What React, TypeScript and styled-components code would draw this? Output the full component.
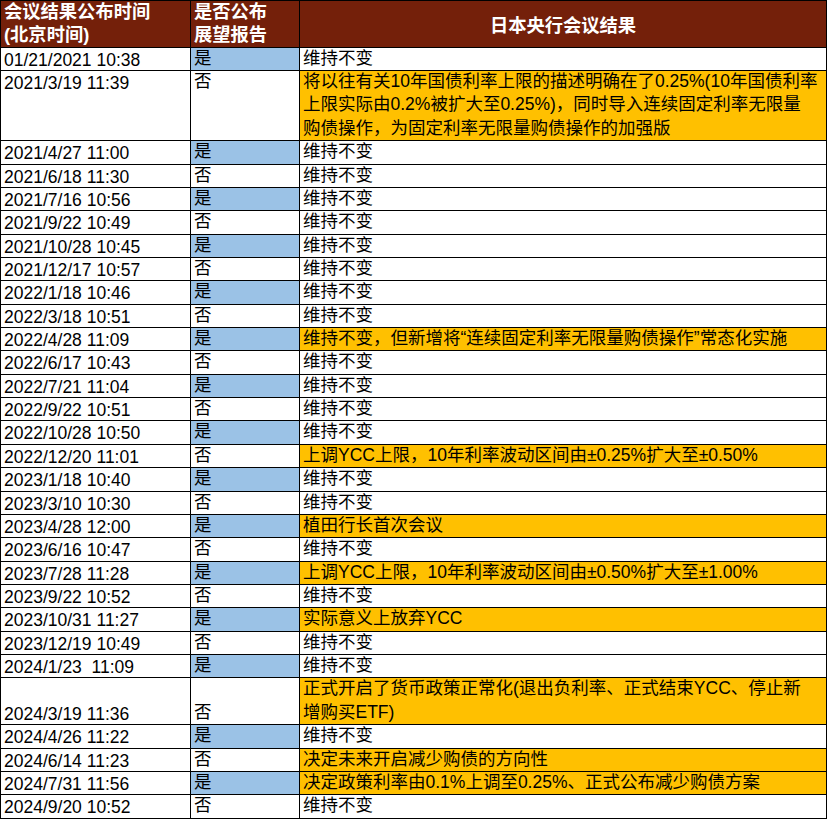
import React from 'react';
import styled, { createGlobalStyle } from 'styled-components';

const LINE = 23.36;

const GlobalStyle = createGlobalStyle`
  body {
    margin: 0;
    background: #fff;
  }
`;

const Sheet = styled.div`
  display: grid;
  grid-template-columns: 190px 109px 527px;
  width: 827px;
  box-sizing: border-box;
  border-top: 1px solid #000;
  border-left: 1px solid #000;
  font-family: "Liberation Sans", "Noto Sans CJK SC", sans-serif;
  font-size: 17.5px;
  color: #000;
`;

const Cell = styled.div<{ $lines: number; $bg?: string }>`
  height: ${(p) => p.$lines * LINE}px;
  box-sizing: border-box;
  border-right: 1px solid #000;
  border-bottom: 1px solid #000;
  background: ${(p) => p.$bg ?? '#fff'};
  padding: 0 3px;
  display: flex;
  flex-direction: column;
  overflow: hidden;
`;

const HeadCell = styled(Cell)<{ $center?: boolean }>`
  background: #74200a;
  color: #fff;
  font-weight: bold;
  font-size: 18.3px;
  padding-top: ${(p) => (p.$center ? '5px' : '0')};
  justify-content: ${(p) => (p.$center ? 'center' : 'flex-start')};
  align-items: ${(p) => (p.$center ? 'center' : 'flex-start')};
`;

const Line = styled.div<{ $latin?: boolean }>`
  flex-shrink: 0;
  height: ${LINE}px;
  line-height: ${(p) => (p.$latin ? '25.3px' : '21px')};
  white-space: pre;
`;

type Row = {
  time: string;
  report: '是' | '否';
  result?: string[];
  highlight?: boolean;
  lines?: number;
  bottom?: boolean;
};

const rows: Row[] = [
  { time: '01/21/2021 10:38', report: '是' },
  {
    time: '2021/3/19 11:39',
    report: '否',
    lines: 3,
    highlight: true,
    result: [
      '将以往有关10年国债利率上限的描述明确在了0.25%(10年国债利率',
      '上限实际由0.2%被扩大至0.25%)，同时导入连续固定利率无限量',
      '购债操作，为固定利率无限量购债操作的加强版',
    ],
  },
  { time: '2021/4/27 11:00', report: '是' },
  { time: '2021/6/18 11:30', report: '否' },
  { time: '2021/7/16 10:56', report: '是' },
  { time: '2021/9/22 10:49', report: '否' },
  { time: '2021/10/28 10:45', report: '是' },
  { time: '2021/12/17 10:57', report: '否' },
  { time: '2022/1/18 10:46', report: '是' },
  { time: '2022/3/18 10:51', report: '否' },
  {
    time: '2022/4/28 11:09',
    report: '是',
    highlight: true,
    result: ['维持不变，但新增将“连续固定利率无限量购债操作”常态化实施'],
  },
  { time: '2022/6/17 10:43', report: '否' },
  { time: '2022/7/21 11:04', report: '是' },
  { time: '2022/9/22 10:51', report: '否' },
  { time: '2022/10/28 10:50', report: '是' },
  {
    time: '2022/12/20 11:01',
    report: '否',
    highlight: true,
    result: ['上调YCC上限，10年利率波动区间由±0.25%扩大至±0.50%'],
  },
  { time: '2023/1/18 10:40', report: '是' },
  { time: '2023/3/10 10:30', report: '否' },
  { time: '2023/4/28 12:00', report: '是', highlight: true, result: ['植田行长首次会议'] },
  { time: '2023/6/16 10:47', report: '否' },
  {
    time: '2023/7/28 11:28',
    report: '是',
    highlight: true,
    result: ['上调YCC上限，10年利率波动区间由±0.50%扩大至±1.00%'],
  },
  { time: '2023/9/22 10:52', report: '否' },
  { time: '2023/10/31 11:27', report: '是', highlight: true, result: ['实际意义上放弃YCC'] },
  { time: '2023/12/19 10:49', report: '否' },
  { time: '2024/1/23  11:09', report: '是' },
  {
    time: '2024/3/19 11:36',
    report: '否',
    lines: 2,
    bottom: true,
    highlight: true,
    result: ['正式开启了货币政策正常化(退出负利率、正式结束YCC、停止新', '增购买ETF)'],
  },
  { time: '2024/4/26 11:22', report: '是' },
  { time: '2024/6/14 11:23', report: '否', highlight: true, result: ['决定未来开启减少购债的方向性'] },
  {
    time: '2024/7/31 11:56',
    report: '是',
    highlight: true,
    result: ['决定政策利率由0.1%上调至0.25%、正式公布减少购债方案'],
  },
  { time: '2024/9/20 10:52', report: '否' },
];

const BLUE = '#9bc2e6';
const YELLOW = '#ffc000';

const App: React.FC = () => {
  return (
    <>
      <GlobalStyle />
      <Sheet>
        <HeadCell $lines={2}>
          <Line>会议结果公布时间</Line>
          <Line>(北京时间)</Line>
        </HeadCell>
        <HeadCell $lines={2}>
          <Line>是否公布</Line>
          <Line>展望报告</Line>
        </HeadCell>
        <HeadCell $lines={2} $center>
          <Line>日本央行会议结果</Line>
        </HeadCell>

        {rows.map((r) => {
          const lines = r.lines ?? 1;
          // bottom-aligned rows get empty lines above the value
          const pad = r.bottom ? Array(lines - 1).fill('') : [];
          const result = r.result ?? ['维持不变'];
          return (
            <React.Fragment key={r.time}>
              <Cell $lines={lines}>
                {pad.map((_, i) => (
                  <Line key={i} />
                ))}
                <Line $latin>{r.time}</Line>
              </Cell>
              <Cell $lines={lines} $bg={r.report === '是' ? BLUE : undefined}>
                {pad.map((_, i) => (
                  <Line key={i} />
                ))}
                <Line>{r.report}</Line>
              </Cell>
              <Cell $lines={lines} $bg={r.highlight ? YELLOW : undefined}>
                {result.map((t) => (
                  <Line key={t}>{t}</Line>
                ))}
              </Cell>
            </React.Fragment>
          );
        })}
      </Sheet>
    </>
  );
};

export default App;
